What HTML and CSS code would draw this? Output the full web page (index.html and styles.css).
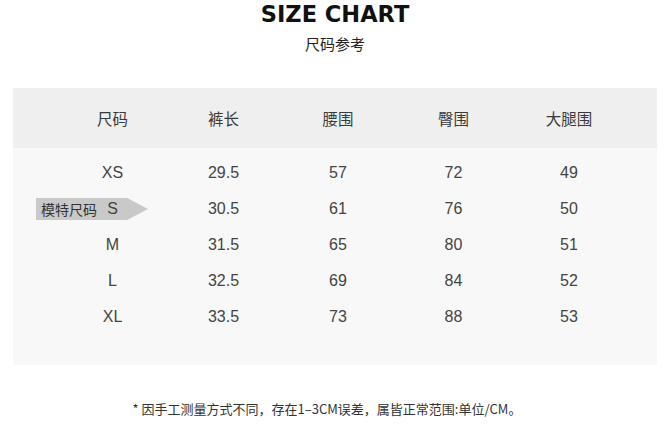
FILE: index.html
```html
<!DOCTYPE html>
<html lang="zh">
<head>
<meta charset="utf-8">
<link rel="stylesheet" href="styles.css">
</head>
<body>
<div class="page">
  <h1 class="title">SIZE CHART</h1>
  <div class="subtitle">尺码参考</div>
  <div class="panel">
    <div class="row head">
      <div>尺码</div><div>裤长</div><div>腰围</div><div>臀围</div><div>大腿围</div>
    </div>
    <div class="body">
      <div class="row"><div>XS</div><div>29.5</div><div>57</div><div>72</div><div>49</div></div>
      <div class="row model"><span class="badge">模特尺码</span><div>S</div><div>30.5</div><div>61</div><div>76</div><div>50</div></div>
      <div class="row"><div>M</div><div>31.5</div><div>65</div><div>80</div><div>51</div></div>
      <div class="row"><div>L</div><div>32.5</div><div>69</div><div>84</div><div>52</div></div>
      <div class="row"><div>XL</div><div>33.5</div><div>73</div><div>88</div><div>53</div></div>
    </div>
  </div>
  <p class="note">* 因手工测量方式不同，存在1–3CM误差，属皆正常范围:单位/CM。</p>
</div>
</body>
</html>
```
FILE: styles.css
```css
html, body { margin: 0; padding: 0; background: #fff; }
body { font-family: "Liberation Sans", "Noto Sans CJK SC", sans-serif; color: #444; }
.page { width: 670px; height: 429px; display: flex; flex-direction: column; align-items: center; overflow: hidden; }
.title {
  margin: 1px 0 0; font-family: "DejaVu Sans", sans-serif; font-weight: bold;
  font-size: 22.5px; line-height: 26px; color: #111; letter-spacing: 0;
}
.subtitle { margin-top: 7px; font-family: "Noto Sans CJK SC", sans-serif; font-size: 15px; line-height: 20px; color: #222; }
.panel { align-self: flex-start; margin: 34px 0 0 13px; width: 644px; background: #f8f8f8; }
.row {
  position: relative; display: grid; grid-template-columns: 109px 113px 116px 115px 116px;
  padding-left: 45px; height: 36px; align-items: center; font-size: 16px;
}
.row > div { text-align: center; }
.head { height: 60px; background: #efefef; font-family: "Noto Sans CJK SC", sans-serif; font-size: 15.5px; color: #3a3a3a; }
.body { padding: 7px 0 30px; }
.badge {
  position: absolute; left: 23px; top: 7px; width: 112px; height: 22px;
  background: #c9c9c9; clip-path: polygon(0 0, 91px 0, 112px 50%, 91px 100%, 0 100%);
  font-family: "Noto Sans CJK SC", sans-serif; font-size: 14px; line-height: 22px;
  padding-left: 5px; box-sizing: border-box; color: #333;
}
.model > div:first-of-type { position: relative; z-index: 1; }
.note { margin: 34px 16px 0 0; font-family: "Noto Sans CJK SC", sans-serif; font-size: 13px; color: #333; }
```
